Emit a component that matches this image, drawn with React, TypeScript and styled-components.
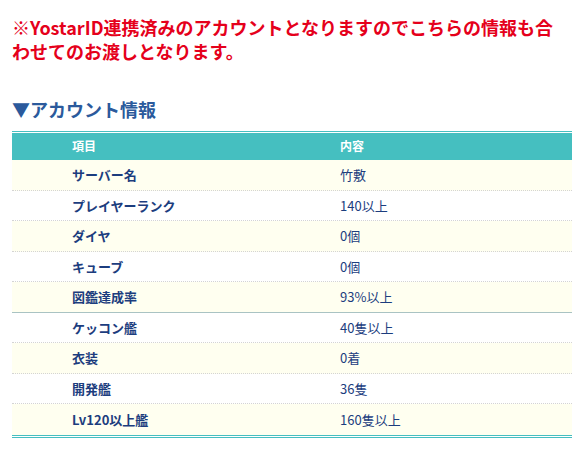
import { FC } from "react"
import styled, { createGlobalStyle } from "styled-components"

const GlobalStyle = createGlobalStyle`
  html, body {
    margin: 0;
    padding: 0;
    background: #ffffff;
  }
  body {
    font-family: "Noto Sans CJK JP", "Noto Sans", sans-serif;
  }
`

const Page = styled.div`
  width: 588px;
  padding: 15px 24px 0 12px;
  box-sizing: border-box;
`

const Notice = styled.p`
  margin: 0;
  font-size: 18px;
  line-height: 24px;
  font-weight: 700;
  color: #e5001b;
`

const SectionTitle = styled.h2`
  margin: 35px 0 0;
  font-size: 18px;
  line-height: 22px;
  font-weight: 700;
  color: #2b5a9c;
`

const Table = styled.div`
  margin-top: 11px;
  width: 560px;
  border-top: 1px solid #45bfc0;
  border-bottom: 3px double #45bfc0;
`

const Row = styled.div<{ $striped?: boolean; $solid?: boolean; $last?: boolean }>`
  display: grid;
  grid-template-columns: 268px 1fr;
  height: ${({ $striped }) => ($striped ? "31px" : "30px")};
  box-sizing: border-box;
  align-items: center;
  background: ${({ $striped }) => ($striped ? "#fffff0" : "#ffffff")};
  border-bottom: ${({ $solid, $last }) =>
    $last ? "none" : $solid ? "1px solid #a9c3c3" : "1px dotted #d4d4d4"};
`

const HeaderRow = styled.div`
  display: grid;
  grid-template-columns: 268px 1fr;
  height: 27px;
  margin-top: 1px;
  padding-bottom: 2px;
  box-sizing: border-box;
  align-items: center;
  background: #45bfc0;
`

const HeadCell = styled.div`
  padding-left: 60px;
  font-size: 12px;
  line-height: 16px;
  font-weight: 700;
  color: #ffffff;
`

const Cell = styled.div<{ $label?: boolean }>`
  padding-left: 60px;
  font-size: 13px;
  line-height: 18px;
  font-weight: ${({ $label }) => ($label ? 700 : 400)};
  color: #1c3d7e;
`

const rows: [string, string][] = [
  ["サーバー名", "竹敷"],
  ["プレイヤーランク", "140以上"],
  ["ダイヤ", "0個"],
  ["キューブ", "0個"],
  ["図鑑達成率", "93%以上"],
  ["ケッコン艦", "40隻以上"],
  ["衣装", "0着"],
  ["開発艦", "36隻"],
  ["Lv120以上艦", "160隻以上"],
]

const App: FC = () => (
  <>
    <GlobalStyle />
    <Page>
      <Notice>
        ※YostarID連携済みのアカウントとなりますのでこちらの情報も合わせてのお渡しとなります。
      </Notice>
      <SectionTitle>▼アカウント情報</SectionTitle>
      <Table>
        <HeaderRow>
          <HeadCell>項目</HeadCell>
          <HeadCell>内容</HeadCell>
        </HeaderRow>
        {rows.map(([label, value], i) => (
          <Row
            key={label}
            $striped={i % 2 === 0}
            $solid={i === 4}
            $last={i === rows.length - 1}
          >
            <Cell $label>{label}</Cell>
            <Cell>{value}</Cell>
          </Row>
        ))}
      </Table>
    </Page>
  </>
)

export default App
